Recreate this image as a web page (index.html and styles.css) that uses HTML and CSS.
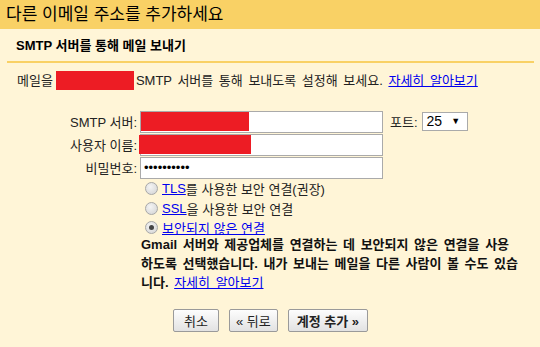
FILE: index.html
```html
<!DOCTYPE html>
<html>
<head>
<meta charset="UTF-8">
<title>다른 이메일 주소를 추가하세요</title>
<link rel="stylesheet" href="styles.css">
</head>
<body>
	<div class="title-bar">다른 이메일 주소를 추가하세요</div>
	<div class="sub-title">SMTP 서버를 통해 메일 보내기</div>
	<div class="rule"></div>

	<div class="intro">메일을<span class="redact intro-redact"></span>SMTP 서버를 통해 보내도록 설정해 보세요. <a href="#">자세히 알아보기</a></div>

	<!-- smtp settings -->
	<form class="smtp-form" onsubmit="event.preventDefault()">
		<div class="row">
			<label class="field-label">SMTP 서버:</label>
			<div class="field">
				<span class="redact input-redact-1"></span>
				<input type="text" class="text-input">
			</div>
			<label class="port-label">포트:</label>
			<div class="select-box">25<span class="arrow">▼</span></div>
		</div>
		<div class="row">
			<label class="field-label">사용자 이름:</label>
			<div class="field">
				<span class="redact input-redact-2"></span>
				<input type="text" class="text-input">
			</div>
		</div>
		<div class="row">
			<label class="field-label">비밀번호:</label>
			<div class="field">
				<input type="password" class="text-input" value="1234567890">
			</div>
		</div>

		<div class="options">
			<label class="option"><span class="radio"></span><a href="#">TLS</a>를 사용한 보안 연결(권장)</label>
			<label class="option"><span class="radio"></span><a href="#">SSL</a>을 사용한 보안 연결</label>
			<label class="option"><span class="radio checked"></span><a href="#">보안되지 않은 연결</a></label>
		</div>

		<p class="warning">Gmail 서버와 제공업체를 연결하는 데 보안되지 않은 연결을 사용하도록 선택했습니다. 내가 보내는 메일을 다른 사람이 볼 수도 있습니다. <a href="#">자세히 알아보기</a></p>

		<div class="actions">
			<button type="button" class="btn">취소</button>
			<button type="button" class="btn btn-back">« 뒤로</button>
			<button type="submit" class="btn btn-strong">계정 추가 »</button>
		</div>
	</form>
</body>
</html>
```

FILE: styles.css
```css
body {
  margin: 0;
  background-color: #fff5d7;
  font-family: "Liberation Sans", Arial, "Noto Sans CJK KR", sans-serif;
  font-size: 13px;
  color: #000;
}

a {
  color: #0000ee;
  text-decoration: underline;
  cursor: pointer;
}

.title-bar {
  background-color: #f9d165;
  height: 29px;
  line-height: 29px;
  padding-left: 6px;
  font-size: 17px;
}

.sub-title {
  padding: 8px 16px 0;
  height: 24px;
  line-height: 17px;
  font-weight: bold;
  font-size: 13px;
}

.rule {
  margin: 0 6px 0 7px;
  height: 2px;
  background-color: #f9d165;
}

.intro {
  padding: 8px 0 0 17px;
  height: 28px;
  line-height: 20px;
  word-spacing: 2px;
  color: #222;
}

.redact {
  display: inline-block;
  background-color: #ed1c24;
}

.intro-redact {
  width: 78px;
  height: 19px;
  margin: 0 2px 0 3px;
  vertical-align: -5px;
}

.smtp-form {
  margin: 0;
  padding-top: 11px;
}

.row {
  display: flex;
  align-items: center;
  height: 23px;
}

.field-label {
  width: 137px;
  text-align: right;
  color: #222;
}

.field {
  position: relative;
  margin-left: 3px;
}

.text-input {
  display: block;
  width: 243px;
  height: 22px;
  margin: 0;
  padding: 0 3px;
  border: 1px solid #aaa;
  box-sizing: border-box;
  background: #fff;
  font-size: 13px;
  font-family: inherit;
}

.field .redact {
  position: absolute;
  top: 1px;
  height: 19px;
}

.input-redact-1 {
  left: 1px;
  width: 108px;
}

.input-redact-2 {
  left: -1px;
  width: 112px;
}

.port-label {
  margin-left: 7px;
  color: #222;
}

.select-box {
  margin-left: 4px;
  width: 46px;
  height: 19px;
  box-sizing: border-box;
  border: 1px solid #aaa;
  background: #fff;
  padding-left: 4px;
  line-height: 17px;
  font-size: 14px;
  display: flex;
  align-items: center;
}

.select-box .arrow {
  font-size: 9px;
  margin-left: 9px;
}

.options {
  padding: 0 0 0 145px;
}

.option {
  display: flex;
  align-items: center;
  height: 19.5px;
  color: #222;
}

.radio {
  width: 11px;
  height: 11px;
  border: 1px solid #a8a8a8;
  border-radius: 50%;
  background: radial-gradient(circle at 40% 35%, #f4f4f4, #d2d2d2);
  margin-right: 4px;
  position: relative;
}

.radio.checked::after {
  content: "";
  position: absolute;
  left: 3px;
  top: 3px;
  width: 5px;
  height: 5px;
  border-radius: 50%;
  background: #444;
}

.warning {
  margin: -3px 0 0 141px;
  width: 378px;
  font-weight: bold;
  line-height: 19px;
  word-spacing: 2px;
  color: #111;
}

.warning a {
  font-weight: normal;
}

.actions {
  display: flex;
  padding: 17px 0 0 173px;
}

.btn {
  height: 23px;
  margin: 0 10px 0 0;
  padding: 0 10px;
  border: 1px solid #9a9a9a;
  border-radius: 2px;
  background: linear-gradient(#fdfdfd, #e2e2e2);
  font-family: inherit;
  font-size: 13px;
  color: #222;
  cursor: pointer;
}

.btn-back {
  padding: 0 6px;
  margin-right: 10px;
}

.btn-strong {
  font-weight: bold;
  padding: 0 8px;
}
```
